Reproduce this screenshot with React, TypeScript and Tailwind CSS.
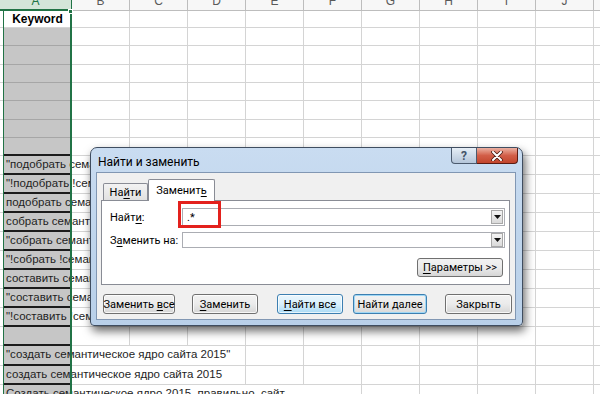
import React from 'react';

type RowSpec = {
  h: string;
  kind: 'keyword' | 'gray' | 'text';
  blackBottom?: boolean;
  text?: string;
  spill?: 'w-[174px]' | 'w-[290px]';
  spillCount?: number;
};

const COLS = ['B', 'C', 'D', 'E', 'F', 'G', 'H', 'I', 'J', 'K'];

const rows: RowSpec[] = [
  { h: 'h-[17px]', kind: 'keyword' },
  { h: 'h-[18px]', kind: 'gray' },
  { h: 'h-[19px]', kind: 'gray' },
  { h: 'h-[18px]', kind: 'gray' },
  { h: 'h-[18px]', kind: 'gray' },
  { h: 'h-[19px]', kind: 'gray' },
  { h: 'h-[18px]', kind: 'gray' },
  { h: 'h-[18px]', kind: 'gray', blackBottom: true },
  { h: 'h-[19px]', kind: 'text', text: '"подобрать семантическое ядро"', spill: 'w-[174px]', spillCount: 3 },
  { h: 'h-[19px]', kind: 'text', text: '"!подобрать !семантическое !ядро"', spill: 'w-[174px]', spillCount: 3 },
  { h: 'h-[19px]', kind: 'text', text: 'подобрать семантическое ядро', spill: 'w-[174px]', spillCount: 3 },
  { h: 'h-[19px]', kind: 'text', text: 'собрать семантическое ядро', spill: 'w-[174px]', spillCount: 3 },
  { h: 'h-[19px]', kind: 'text', text: '"собрать семантическое ядро"', spill: 'w-[174px]', spillCount: 3 },
  { h: 'h-[19px]', kind: 'text', text: '"!собрать !семантическое !ядро"', spill: 'w-[174px]', spillCount: 3 },
  { h: 'h-[19px]', kind: 'text', text: 'составить семантическое ядро', spill: 'w-[174px]', spillCount: 3 },
  { h: 'h-[19px]', kind: 'text', text: '"составить семантическое ядро"', spill: 'w-[174px]', spillCount: 3 },
  { h: 'h-[19px]', kind: 'text', text: '"!составить !семантическое !ядро"', spill: 'w-[174px]', spillCount: 3 },
  { h: 'h-[19px]', kind: 'gray', blackBottom: true },
  { h: 'h-[20px]', kind: 'text', text: '"создать семантическое ядро сайта 2015"', spill: 'w-[174px]', spillCount: 3 },
  { h: 'h-[19px]', kind: 'text', text: 'создать семантическое ядро сайта 2015', spill: 'w-[174px]', spillCount: 3 },
  { h: 'h-[20px]', kind: 'text', text: 'Создать семантическое ядро 2015, правильно, сайт', spill: 'w-[290px]', spillCount: 5 },
];

function SheetRow({ r }: { r: RowSpec }) {
  const rest = COLS.slice(r.spillCount ?? 0);
  let aCls = '';
  if (r.kind === 'keyword') {
    aCls = 'bg-white border-b border-[#d4d4d4] flex items-center justify-center font-bold text-[12px] text-black';
  } else if (r.kind === 'gray') {
    aCls = r.blackBottom
      ? 'bg-[#c6c6c6] border-b-2 border-[#1c1c1c]'
      : 'bg-[#c6c6c6] border-b border-[#a6a6a6]';
  } else {
    aCls = 'bg-[#c6c6c6] border-b-2 border-[#1c1c1c] relative z-10 flex items-center pl-[3px] text-[11.5px] text-[#1e1e1e] whitespace-nowrap';
  }
  return (
    <div className={`flex shrink-0 ${r.h}`}>
      <div className="w-[3px] shrink-0 border-b border-[#d4d4d4]" />
      <div className={`w-[69px] shrink-0 ${aCls}`}>
        {r.kind === 'keyword' ? 'Keyword' : r.kind === 'text' ? <span>{r.text}</span> : null}
      </div>
      {r.spill ? <div className={`${r.spill} shrink-0 border-b border-r border-[#d4d4d4]`} /> : null}
      {rest.map((c) => (
        <div key={c} className="w-[58px] shrink-0 border-b border-r border-[#d4d4d4]" />
      ))}
    </div>
  );
}

function Btn({
  children,
  w,
  variant = 'normal',
}: {
  children: React.ReactNode;
  w: string;
  variant?: 'normal' | 'hot' | 'default';
}) {
  const base =
    'h-[20px] shrink-0 rounded-[3px] border flex items-center justify-center whitespace-nowrap text-[11px] leading-none text-black';
  const v =
    variant === 'hot'
      ? 'border-[#3c7fb1] bg-gradient-to-b from-[#eaf6fd] via-[#d9f0fc] to-[#a9daf5] shadow-[inset_0_0_0_1px_rgba(255,255,255,0.7)]'
      : variant === 'default'
        ? 'border-[#3c7fb1] bg-gradient-to-b from-[#f2f2f2] via-[#ebebeb] to-[#d8d8d8] shadow-[inset_0_0_0_1px_#9fd7f5]'
        : 'border-[#707070] bg-gradient-to-b from-[#f2f2f2] via-[#ebebeb] to-[#d6d6d6] shadow-[inset_0_0_0_1px_rgba(255,255,255,0.8)]';
  return <div className={`${base} ${v} ${w}`}>{children}</div>;
}

function DropBtn() {
  return (
    <div className="ml-auto mr-[1px] w-[12px] h-[14px] border border-[#a8a8a8] bg-gradient-to-b from-[#f4f4f4] to-[#dadada] flex items-center justify-center">
      <svg width="7" height="4" viewBox="0 0 7 4">
        <path d="M0 0 L7 0 L3.5 4 Z" fill="#111" />
      </svg>
    </div>
  );
}

function Dialog() {
  return (
    <div className="absolute left-[90px] top-[147px] z-30 w-[433px] h-[179px] rounded-t-[7px] rounded-b-[4px] border border-[#3f4d60] bg-gradient-to-b from-[#c9dcf1] via-[#bfd5ec] to-[#b9d0e9] shadow-[2px_5px_10px_rgba(0,0,0,0.6)] flex flex-col pl-[5px] pr-[6px] font-['Roboto',sans-serif]">
      <div className="h-[24px] shrink-0 flex items-start">
        <div className="pl-[2px] mt-[7px] text-[12px] leading-[14px] text-black whitespace-nowrap">Найти и заменить</div>
        <div className="ml-auto mr-[-2px] flex">
          <div className="w-[26px] h-[16px] border border-t-0 border-[#4b5a6e] rounded-bl-[4px] bg-gradient-to-b from-[#e6eef6] to-[#b5c6da] flex items-center justify-center text-[12px] font-bold leading-none text-[#44546a]">
            ?
          </div>
          <div className="w-[41px] h-[16px] border border-t-0 border-l-0 border-[#5b1b12] rounded-br-[4px] bg-gradient-to-b from-[#eab0a2] via-[#d25e48] to-[#c2452c] flex items-center justify-center">
            <svg width="12" height="10" viewBox="0 0 12 10">
              <path d="M2 1 L10 9 M10 1 L2 9" stroke="#4a1a12" strokeWidth="3.6" strokeLinecap="round" />
              <path d="M2 1 L10 9 M10 1 L2 9" stroke="#ffffff" strokeWidth="2" strokeLinecap="round" />
            </svg>
          </div>
        </div>
      </div>
      <div className="h-[148px] shrink-0 bg-[#f0f0f0] border border-[#8197b3] flex flex-col pt-[6px] pl-[4px]">
        <div className="h-[21px] shrink-0 flex items-end pl-[2px] relative z-10">
          <div className="w-[45px] h-[17px] border border-b-0 border-[#898c95] rounded-t-[2px] bg-gradient-to-b from-[#f3f3f3] to-[#e1e1e1] flex items-center justify-center text-[11px] leading-none text-black whitespace-nowrap">
            <span>
              На<u className="underline-offset-2">й</u>ти
            </span>
          </div>
          <div className="w-[67px] h-[22px] mb-[-1px] border border-b-0 border-[#898c95] rounded-t-[2px] bg-white flex items-center justify-center pb-[1px] text-[11px] leading-none text-black whitespace-nowrap">
            <span>
              Заменит<u className="underline-offset-2">ь</u>
            </span>
          </div>
        </div>
        <div className="relative w-[409px] h-[85px] shrink-0 bg-white border border-[#898c95] flex flex-col pt-[7px] pl-[8px] pr-[4px] text-[11px] leading-none text-black whitespace-nowrap">
          <div className="flex items-center h-[18px]">
            <div className="w-[72px] shrink-0">
              Найт<u className="underline-offset-2">и</u>:
            </div>
            <div className="flex-1 h-[18px] border border-[#abadb3] bg-white flex items-center pl-[4px]">
              <span>.*</span>
              <DropBtn />
            </div>
          </div>
          <div className="mt-[6px] flex items-center h-[16px]">
            <div className="w-[72px] shrink-0">
              З<u className="underline-offset-2">а</u>менить на:
            </div>
            <div className="flex-1 h-[16px] border border-[#abadb3] bg-white flex items-center">
              <DropBtn />
            </div>
          </div>
          <div className="mt-[10px] self-end mr-[2px] w-[86px] h-[19px] rounded-[3px] border border-[#707070] bg-gradient-to-b from-[#f2f2f2] via-[#ebebeb] to-[#d6d6d6] flex items-center justify-center">
            <span>
              <u className="underline-offset-2">П</u>араметры &gt;&gt;
            </span>
          </div>
          <div className="absolute left-[76px] top-0 w-[43px] h-[27px] border-[3px] border-[#e3211d]" />
        </div>
        <div className="mt-[9px] flex h-[20px]">
          <div className="ml-[2px]">
            <Btn w="w-[72px]">
              <span>
                Заменить <u className="underline-offset-2">в</u>се
              </span>
            </Btn>
          </div>
          <div className="ml-[17px]">
            <Btn w="w-[66px]">
              <span>
                <u className="underline-offset-2">З</u>аменить
              </span>
            </Btn>
          </div>
          <div className="ml-[19px]">
            <Btn w="w-[66px]" variant="hot">
              <span>
                <u className="underline-offset-2">Н</u>айти все
              </span>
            </Btn>
          </div>
          <div className="ml-[10px]">
            <Btn w="w-[74px]" variant="default">
              <span>Найти далее</span>
            </Btn>
          </div>
          <div className="ml-[18px]">
            <Btn w="w-[67px]">
              <span>Закрыть</span>
            </Btn>
          </div>
        </div>
      </div>
    </div>
  );
}

export default function App() {
  return (
    <div className="relative w-[600px] h-[394px] overflow-hidden bg-white font-['Liberation_Sans',Arial,sans-serif]">
      <div className="flex flex-col">
        <div className="flex h-[11px] shrink-0 bg-[#f7f7f7]">
          <div className="w-[72px] shrink-0 overflow-hidden bg-[#d3e5d9] border-b-2 border-r border-[#217346] text-center text-[#217346]">
            <div className="mt-[-5px] text-[12px] leading-[12px]">A</div>
          </div>
          {COLS.map((c) => (
            <div
              key={c}
              className="w-[58px] shrink-0 overflow-hidden border-b border-r border-[#bdbdbd] text-center text-[#5a5a5a]"
            >
              <div className="mt-[-5px] text-[12px] leading-[12px]">{c}</div>
            </div>
          ))}
        </div>
        {rows.map((r, i) => (
          <SheetRow key={i} r={r} />
        ))}
      </div>
      <div className="absolute left-[3px] top-[11px] bottom-0 w-[69px] z-20 border-l border-r-2 border-[#217346] pointer-events-none" />
      <div className="absolute left-[68px] top-[9px] w-[5px] h-[5px] z-20 bg-[#217346] border border-white" />
      <Dialog />
    </div>
  );
}
